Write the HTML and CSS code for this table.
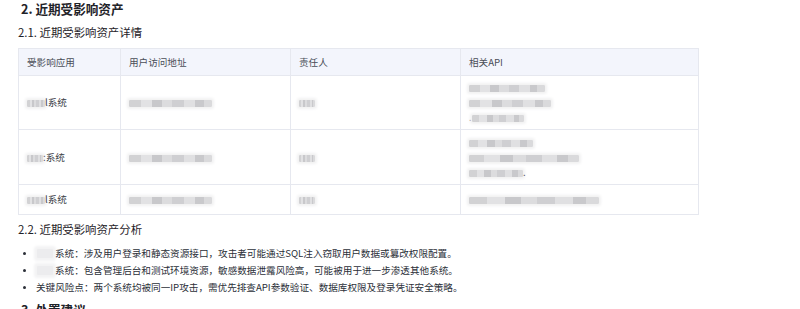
FILE: index.html
```html
<!DOCTYPE html>
<html lang="zh-CN">
<head>
<meta charset="utf-8">
<link rel="stylesheet" href="styles.css">
</head>
<body>
<div class="doc">
  <h2 class="h2">2. 近期受影响资产</h2>
  <h3 class="h3">2.1. 近期受影响资产详情</h3>
  <table class="tbl">
    <colgroup>
      <col class="c1"><col class="c2"><col class="c3"><col class="c4">
    </colgroup>
    <thead>
      <tr><th>受影响应用</th><th>用户访问地址</th><th>责任人</th><th>相关API</th></tr>
    </thead>
    <tbody>
      <tr class="r1">
        <td><span class="bl w18"></span>l系统</td>
        <td><span class="bl w83"></span></td>
        <td><span class="bl w16"></span></td>
        <td class="api"><div class="ln"><span class="bl w76"></span></div><div class="ln"><span class="bl w82"></span></div><div class="ln">.<span class="bl w52"></span></div></td>
      </tr>
      <tr class="r2">
        <td><span class="bl w16"></span>:系统</td>
        <td><span class="bl w83"></span></td>
        <td><span class="bl w16"></span></td>
        <td class="api"><div class="ln"><span class="bl w64"></span></div><div class="ln"><span class="bl w110"></span></div><div class="ln"><span class="bl w54"></span>.</div></td>
      </tr>
      <tr class="r3">
        <td><span class="bl w18"></span>l系统</td>
        <td><span class="bl w83"></span></td>
        <td><span class="bl w16"></span></td>
        <td><span class="bl w130"></span></td>
      </tr>
    </tbody>
  </table>
  <h3 class="h3 h3b">2.2. 近期受影响资产分析</h3>
  <ul class="list">
    <li><span class="bl faint w16"></span>系统：涉及用户登录和静态资源接口，攻击者可能通过SQL注入窃取用户数据或篡改权限配置。</li>
    <li><span class="bl faint w16"></span>系统：包含管理后台和测试环境资源，敏感数据泄露风险高，可能被用于进一步渗透其他系统。</li>
    <li>关键风险点：两个系统均被同一IP攻击，需优先排查API参数验证、数据库权限及登录凭证安全策略。</li>
  </ul>
  <h2 class="h2 h2b">3. 处置建议</h2>
</div>
</body>
</html>
```
FILE: styles.css
```css
html, body {
  margin: 0;
  padding: 0;
  background: #ffffff;
}
body {
  font-family: "Noto Sans CJK SC", "Noto Sans", sans-serif;
  color: #262a33;
  overflow: hidden;
}
.doc {
  padding: 0 0 0 18px;
}
.h2 {
  margin: 0;
  padding-left: 3px;
  font-size: 12.6px;
  line-height: 17px;
  font-weight: 700;
  color: #1f2329;
}
.h2b {
  margin-top: 5px;
}
.h3 {
  margin: 7px 0 8px 0;
  font-size: 11.4px;
  line-height: 16px;
  font-weight: 400;
  color: #1f2329;
}
.h3b {
  margin: 6px 0 8px 0;
}
.tbl {
  border-collapse: collapse;
  table-layout: fixed;
  width: 680px;
  font-size: 9.6px;
  color: #3a3d45;
}
.c1 { width: 102px; }
.c2 { width: 170px; }
.c3 { width: 170px; }
.c4 { width: 238px; }
.tbl th, .tbl td {
  border: 1px solid #e6e8ef;
  text-align: left;
  padding: 0 8px;
  vertical-align: middle;
  line-height: 15px;
}
.tbl th {
  background: #f3f5fc;
  font-weight: 400;
  color: #4a4e58;
  height: 26px;
}
.tbl td { white-space: nowrap; }
.r1 td { height: 53px; }
.r2 td { height: 54px; }
.r3 td { height: 29px; }
.ln { height: 15px; line-height: 15px; }
.bl {
  display: inline-block;
  height: 7px;
  vertical-align: -1px;
  background:
    linear-gradient(90deg,
      #d2d2d4 0 14%, #e2e2e4 14% 28%, #c8c8cb 28% 40%, #dcdcde 40% 52%,
      #cfcfd2 52% 66%, #e0e0e2 66% 80%, #c9c9cc 80% 90%, #dadadc 90% 100%);
  box-shadow: 0 0 3px 2px #f1f1f2;
  border-radius: 1px;
}
.faint {
  background: #ececee;
  box-shadow: 0 0 3px 3px #f3f3f4;
  height: 9px;
  margin: 0 2px 0 1px;
}
.w16 { width: 16px; }
.w18 { width: 18px; }
.w52 { width: 52px; }
.w54 { width: 54px; }
.w64 { width: 64px; }
.w76 { width: 76px; }
.w82 { width: 82px; }
.w83 { width: 83px; }
.w110 { width: 110px; }
.w130 { width: 130px; }
.list {
  margin: 0;
  padding: 0 0 0 18px;
  font-size: 9.6px;
  line-height: 17px;
  color: #2b2f38;
}
.list li {
  padding-left: 0;
}
.list li::marker {
  font-size: 8px;
}
```
